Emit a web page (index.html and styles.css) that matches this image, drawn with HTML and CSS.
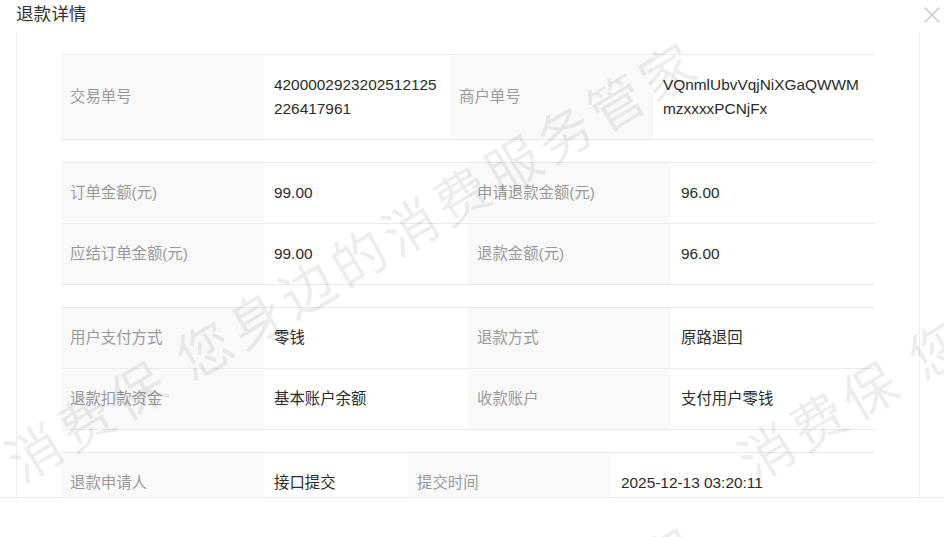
FILE: index.html
```html
<!DOCTYPE html>
<html lang="zh-CN">
<head>
    <meta charset="UTF-8">
    <meta name="viewport" content="width=device-width, initial-scale=1.0">
    <title>退款详情</title>
    <link rel="stylesheet" href="styles.css">
</head>
<body>

    <div class="dialog">
        <div class="dialog-head">
            <h3 class="dialog-title">退款详情</h3>
            <span class="dialog-close">
                <svg width="18" height="18" viewBox="0 0 18 18"><path d="M1.5 1.5L16.5 16.5M16.5 1.5L1.5 16.5"/></svg>
            </span>
        </div>

        <div class="dialog-body">
            <!-- 单号 -->
            <table class="info info-ids">
                <colgroup>
                    <col class="col-label"><col class="col-v1"><col class="col-label"><col class="col-v2">
                </colgroup>
                <tr>
                    <td class="label">交易单号</td>
                    <td class="value">4200002923202512125226417961</td>
                    <td class="label">商户单号</td>
                    <td class="value">VQnmlUbvVqjNiXGaQWWMmzxxxxPCNjFx</td>
                </tr>
            </table>

            <!-- 金额 -->
            <table class="info info-even">
                <colgroup>
                    <col class="col-label"><col class="col-v1"><col class="col-label"><col class="col-v2">
                </colgroup>
                <tr>
                    <td class="label">订单金额(元)</td>
                    <td class="value">99.00</td>
                    <td class="label">申请退款金额(元)</td>
                    <td class="value">96.00</td>
                </tr>
                <tr>
                    <td class="label">应结订单金额(元)</td>
                    <td class="value">99.00</td>
                    <td class="label">退款金额(元)</td>
                    <td class="value">96.00</td>
                </tr>
            </table>

            <!-- 方式 -->
            <table class="info info-even">
                <colgroup>
                    <col class="col-label"><col class="col-v1"><col class="col-label"><col class="col-v2">
                </colgroup>
                <tr>
                    <td class="label">用户支付方式</td>
                    <td class="value">零钱</td>
                    <td class="label">退款方式</td>
                    <td class="value">原路退回</td>
                </tr>
                <tr>
                    <td class="label">退款扣款资金</td>
                    <td class="value">基本账户余额</td>
                    <td class="label">收款账户</td>
                    <td class="value">支付用户零钱</td>
                </tr>
            </table>

            <!-- 申请 -->
            <table class="info info-apply">
                <colgroup>
                    <col class="col-label"><col class="col-v1"><col class="col-label"><col class="col-v2">
                </colgroup>
                <tr>
                    <td class="label">退款申请人</td>
                    <td class="value">接口提交</td>
                    <td class="label">提交时间</td>
                    <td class="value">2025-12-13 03:20:11</td>
                </tr>
            </table>
        </div>

        <div class="dialog-foot"></div>
    </div>

    <!-- watermark -->
    <div class="watermark">
        <span class="wm wm-1">消费保 您身边的消费服务管家</span>
        <span class="wm wm-2">消费保 您身边的消费服务管家</span>
        <span class="wm wm-3">消费保 您身边的消费服务管家</span>
    </div>

</body>
</html>
```

FILE: styles.css
```css
body {
    margin: 0;
    background: #fff;
    font-family: "Liberation Sans", "Noto Sans CJK SC", sans-serif;
    color: #333;
    overflow: hidden;
}

.dialog {
    width: 944px;
    height: 537px;
    display: flex;
    flex-direction: column;
}

/* Header */
.dialog-head {
    height: 32px;
    display: flex;
    justify-content: space-between;
    align-items: flex-start;
    flex-shrink: 0;
}

.dialog-title {
    margin: 0 0 0 16px;
    font-size: 17.6px;
    font-weight: normal;
    line-height: 28px;
    color: #333;
}

.dialog-close {
    margin: 6px 3px 0 0;
    width: 18px;
    height: 18px;
}

.dialog-close svg path {
    stroke: #c4c4c4;
    stroke-width: 1.4;
    fill: none;
}

/* Body */
.dialog-body {
    height: 465px;
    margin: 0 24px 0 16px;
    padding: 22px 44px 0 44px;
    border-left: 1px solid #ececec;
    border-right: 1px solid #ececec;
    overflow: hidden;
    box-sizing: border-box;
    flex-shrink: 0;
}

.dialog-foot {
    flex: 1;
    border-top: 1px solid #ececec;
}

/* Info tables */
.info {
    width: 814px;
    border-collapse: collapse;
    table-layout: fixed;
    margin-bottom: 22px;
}

.info td {
    padding: 18px 10px;
    font-size: 15.4px;
    line-height: 24px;
    border-top: 1px solid #ebebeb;
    border-bottom: 1px solid #ebebeb;
    vertical-align: middle;
    word-break: break-all;
}

.info .label {
    background: #f9f9f9;
    color: #999;
    padding-left: 9px;
}

.info .value {
    color: #2b2b2b;
}

.col-label {
    width: 203px;
}

.info-ids .col-v1 { width: 186px; }
.info-ids .col-v2 { width: 222px; }

.info-even .col-v1 { width: 204px; }
.info-even .col-v2 { width: 204px; }

.info-apply .col-v1 { width: 144px; }
.info-apply .col-v2 { width: 264px; }

/* Watermark */
.watermark {
    position: fixed;
    top: 0;
    left: 0;
    width: 944px;
    height: 537px;
    overflow: hidden;
    pointer-events: none;
}

.wm {
    position: absolute;
    white-space: nowrap;
    font-family: "Noto Sans CJK SC", sans-serif;
    font-size: 54px;
    line-height: 54px;
    letter-spacing: 6px;
    color: rgba(0, 0, 0, 0.07);
    transform: rotate(-31deg);
    transform-origin: 0 50%;
}

.wm-1 {
    left: 10px;
    top: 437px;
}

.wm-2 {
    left: 742px;
    top: 437px;
}

.wm-3 {
    left: 10px;
    top: 922px;
}
```
